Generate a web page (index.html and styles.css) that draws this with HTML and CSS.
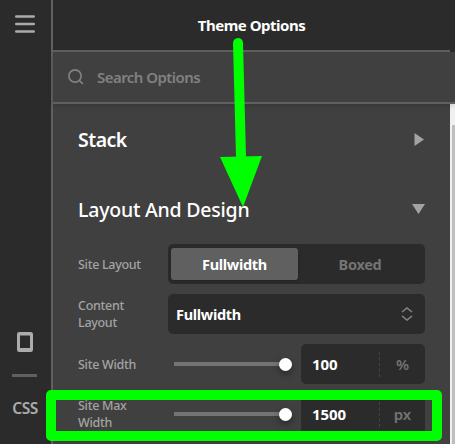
FILE: index.html
```html
<!DOCTYPE html>
<html lang="en">
<head>
<meta charset="utf-8">
<title>Theme Options</title>
<link rel="stylesheet" href="styles.css">
</head>
<body>
<div class="app">
  <nav class="rail">
    <svg class="menu" width="20" height="19" viewBox="0 0 20 19"><path d="M1.3 1.5h17.4M1.3 9h17.4M1.3 16.5h17.4" stroke="#acacac" stroke-width="2.6" stroke-linecap="round"/></svg>
    <div class="rail-bottom">
      <svg width="16" height="20" viewBox="0 0 16 20"><path fill="#acacac" fill-rule="evenodd" d="M2.3 0h11.4Q16 0 16 2.3v15.4q0 2.3-2.3 2.3H2.3Q0 20 0 17.7V2.3Q0 0 2.3 0zM3 3.5v12.5h10V3.5z"/></svg>
      <span class="rule"></span>
      <span class="css">CSS</span>
    </div>
  </nav>
  <main class="panel">
    <header class="top"><h1>Theme Options</h1></header>
    <div class="search">
      <svg width="16" height="16" viewBox="0 0 16 16" fill="none" stroke="#818181" stroke-width="1.7"><circle cx="7" cy="7" r="6.1"/><path d="M11.8 11.8l3 3"/></svg>
      <span class="hint">Search Options</span>
    </div>
    <div class="body">
      <div class="content">
        <div class="section stack"><h2>Stack</h2><svg width="10" height="13" viewBox="0 0 10 13"><path d="M.5 0v13L10 6.5z" fill="#a3a3a3"/></svg></div>
        <div class="section design"><h2>Layout And Design</h2><svg width="13" height="10" viewBox="0 0 13 10"><path d="M0 0h13L6.5 10z" fill="#a3a3a3"/></svg></div>
        <div class="rows">
          <div class="row"><label><span>Site Layout</span></label><div class="toggle"><b class="on">Fullwidth</b><b>Boxed</b></div></div>
          <div class="row"><label><span>Content</span><span>Layout</span></label><div class="select"><b>Fullwidth</b><svg width="12" height="14" viewBox="0 0 12 14" fill="none" stroke="#858585" stroke-width="1.6"><path d="M1 5l5-4 5 4M1 9l5 4 5-4"/></svg></div></div>
          <div class="row"><label><span>Site Width</span></label><div class="slider"><i></i></div><div class="number"><b>100</b><em>%</em></div></div>
          <div class="row"><label><span>Site Max</span><span>Width</span></label><div class="slider"><i></i></div><div class="number"><b>1500</b><em>px</em></div></div>
        </div>
      </div>
      <div class="scroll"><i></i></div>
    </div>
  </main>
  <svg class="arrow" width="455" height="444" viewBox="0 0 455 444"><path d="M238 43L241 157" stroke="#0f0" stroke-width="10" stroke-linecap="round"/><path d="M220 157l42-1-19 51z" fill="#0f0"/></svg>
  <div class="highlight"></div>
</div>
</body>
</html>
```
FILE: styles.css
```css
* { box-sizing: border-box; }
body { margin: 0; overflow: hidden; font-family: "Noto Sans", "Open Sans", sans-serif; }
svg { display: block; flex: none; }
span, b, h1, h2 { white-space: nowrap; }
.app { position: relative; display: flex; width: 455px; height: 444px; overflow: hidden; background: #2b2b2b; }
.rail { width: 53px; flex: none; border-right: 2px solid #606060; display: flex; flex-direction: column; align-items: center; justify-content: space-between; padding: 15px 2px 0 1px; }
.rail-bottom { display: flex; flex-direction: column; align-items: center; height: 112px; }
.rule { width: 25px; height: 3px; background: #606060; margin-top: 22px; }
.css { font-size: 15.5px; line-height: 20px; font-weight: 600; color: #acacac; margin-top: 21px; letter-spacing: -.5px; }
.panel { flex: 1; min-width: 0; display: flex; flex-direction: column; }
.top { height: 52px; width: 397px; border-bottom: 2px solid #606060; display: flex; justify-content: center; align-items: center; }
.top h1 { margin: -1px 0 0; color: #fff; font-size: 15px; line-height: 20px; font-weight: 700; letter-spacing: -.5px; }
.search { height: 52px; flex: none; border-bottom: 2px solid #606060; background: #404040; display: flex; align-items: center; gap: 13px; padding-left: 15px; box-shadow: 0 2px 5px rgba(0,0,0,.16); z-index: 1; }
.hint { color: #818181; font-size: 15px; font-weight: 600; line-height: 20px; letter-spacing: -.55px; }
.body { flex: 1; display: flex; min-height: 0; }
.content { width: 397px; background: #404040; padding: 0 25px; }
.section { display: flex; justify-content: space-between; align-items: center; height: 70px; }
.section h2 { margin: 2px 0 0; color: #fff; font-size: 19.5px; line-height: 28px; font-weight: 600; letter-spacing: -.5px; }
.stack { padding-right: 1px; }
.design h2 { font-weight: 500; letter-spacing: -.22px; }
.rows { display: flex; flex-direction: column; gap: 10px; }
.row { display: flex; height: 40px; align-items: center; }
label { width: 90px; flex: none; display: flex; flex-direction: column; color: #a3a3a3; font-size: 12.5px; line-height: 17px; font-weight: 500; letter-spacing: -.3px; }
.toggle, .select { width: 257px; height: 40px; background: #2b2b2b; border-radius: 5px; display: flex; align-items: center; }
.toggle { padding: 3px; }
.toggle b { flex: 1; text-align: center; height: 32px; line-height: 33px; font-size: 14.5px; letter-spacing: -.3px; color: #747474; margin-top: -1px; }
.toggle .on { flex: 0 0 127px; color: #fff; background: #606060; border-radius: 3px; box-shadow: 0 1px 3px rgba(0,0,0,.2); }
.select { padding: 0 12px 0 8px; justify-content: space-between; }
.select b { color: #fff; font-size: 14.5px; letter-spacing: -.3px; }
.slider { width: 118px; height: 4px; margin: 0 9px 0 6px; background: #747474; background-size: 105px 4px; display: flex; align-items: center; justify-content: flex-end; }
.slider i { width: 13px; height: 13px; border-radius: 50%; background: #fff; box-shadow: 0 3px 7px rgba(0,0,0,.4); }
.number { width: 124px; height: 40px; border-radius: 5px; background: #2b2b2b; display: flex; align-items: center; padding-left: 11px; }
.number b { flex: 1; color: #fff; font-size: 15px; letter-spacing: -.1px; }
.number em { width: 46px; height: 25px; line-height: 25px; border-left: 1px dashed #444; text-align: center; font-style: normal; font-weight: 600; font-size: 15px; color: #747474; }
.scroll { width: 5px; background: #f0f0f0; display: flex; padding: 21px 0 0 2px; }
.scroll i { flex: 1; background: #bebebe; }
.arrow { position: absolute; left: 0; top: 0; z-index: 3; }
.highlight { position: absolute; left: 46px; top: 390px; width: 396px; height: 51px; border: 10px solid #0f0; border-radius: 5px; z-index: 4; }
```
